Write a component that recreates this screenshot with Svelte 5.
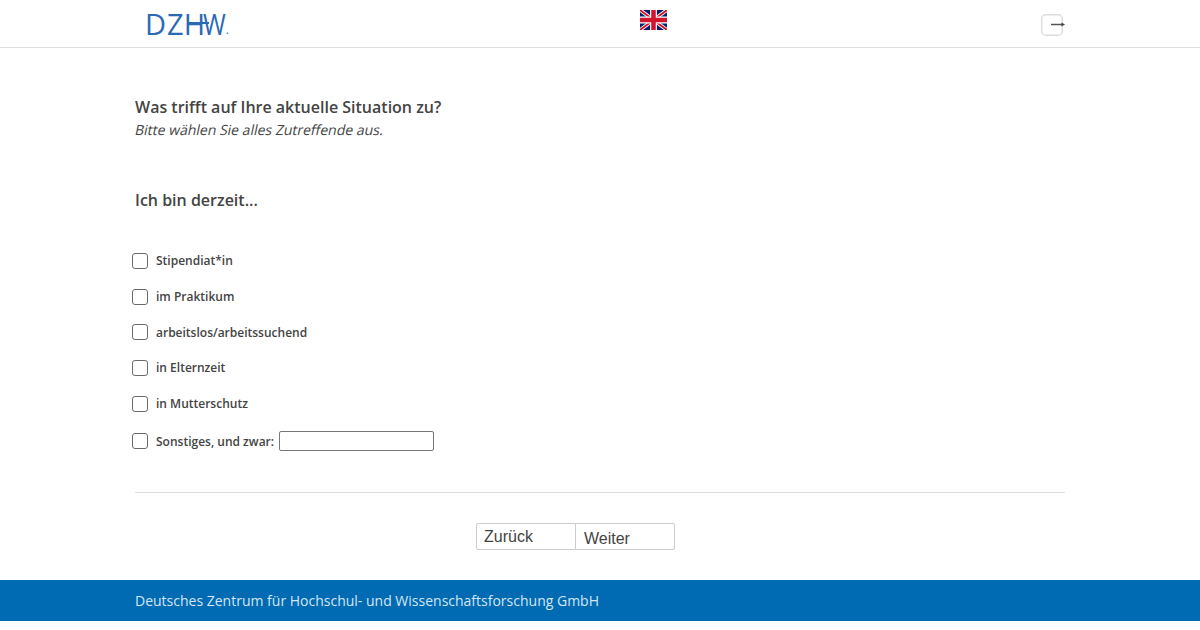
<script>
  const options = ['Stipendiat*in', 'im Praktikum', 'arbeitslos/arbeitssuchend', 'in Elternzeit', 'in Mutterschutz'];
</script>

<header class="topbar">
  <div class="logo"><span class="d">D</span><span class="z">Z</span><span class="h">H</span><span class="w">W</span><span class="dot">.</span></div>
  <svg class="flag" viewBox="0 0 60 44" preserveAspectRatio="none" aria-label="English">
    <rect width="60" height="44" fill="#00206e" />
    <path d="M0 0L60 44M60 0L0 44" stroke="#fff" stroke-width="8" />
    <path d="M0 0L60 44M60 0L0 44" stroke="#cf142b" stroke-width="4" />
    <path d="M30 0V44M0 22H60" stroke="#fff" stroke-width="15" />
    <path d="M30 0V44M0 22H60" stroke="#cf142b" stroke-width="10" />
  </svg>
  <svg class="exit" viewBox="0 0 26 24" aria-label="Abmelden">
    <rect x="1.7" y="1.7" width="20.6" height="20.6" rx="4" fill="none" stroke="#dcdcdc" stroke-width="1.4" />
    <path d="M11 11.5H22" stroke="#555" stroke-width="1.5" />
    <path d="M21.5 9.6L25 11.5L21.5 13.4Z" fill="#444" />
  </svg>
</header>

<main class="content">
  <h1>Was trifft auf Ihre aktuelle Situation zu?</h1>
  <p class="hint"><span>Bitte wählen Sie alles Zutreffende aus.</span></p>
  <h2>Ich bin derzeit...</h2>

  <ul class="options">
    {#each options as option}
      <li>
        <label><input type="checkbox" /><span>{option}</span></label>
      </li>
    {/each}
    <li class="other">
      <label><input type="checkbox" /><span>Sonstiges, und zwar:</span></label>
      <input class="other-text" type="text" />
    </li>
  </ul>

  <hr />

  <div class="buttons">
    <button type="button" class="back">Zurück</button>
    <button type="button" class="next">Weiter</button>
  </div>
</main>

<footer class="footer">
  <div>Deutsches Zentrum für Hochschul- und Wissenschaftsforschung GmbH</div>
</footer>

<style>
  :global(body) {
    margin: 0;
    background: #fff;
    color: #444;
    font-family: "Open Sans", sans-serif;
  }

  .topbar {
    position: relative;
    height: 47px;
    border-bottom: 1px solid #ddd;
  }
  .logo {
    position: absolute;
    left: 145px;
    top: 8px;
    display: flex;
    color: #2a6ab5;
    font-family: "Open Sans", sans-serif;
    font-size: 29px;
    font-weight: 400;
    line-height: 32px;
  }
  .logo .d { letter-spacing: 1px; }
  .logo .h { letter-spacing: -2px; position: relative; }
  .logo .h::after {
    content: "";
    position: absolute;
    left: 4px;
    top: 14px;
    width: 21px;
    height: 2px;
    background: #2a6ab5;
  }
  .logo .w { letter-spacing: -4px; transform: scaleX(0.85); transform-origin: left; }
  .logo .dot { font-size: 12px; margin-top: 6px; }
  .flag {
    position: absolute;
    left: 640px;
    top: 10px;
    width: 27px;
    height: 20px;
  }
  .exit {
    position: absolute;
    left: 1040px;
    top: 13px;
    width: 26px;
    height: 24px;
  }

  .content {
    width: 930px;
    margin-left: 135px;
    padding-top: 47px;
  }
  h1 {
    margin: 0;
    font-size: 16px;
    line-height: 24px;
    font-weight: 600;
  }
  .hint {
    margin: 0;
    font-size: 14px;
    line-height: 22px;
  }
  /* the reference's italic is a slanted roman */
  .hint span {
    display: inline-block;
    margin-left: -2px;
    transform: skewX(-12deg);
    transform-origin: left bottom;
  }
  h2 {
    margin: 47px 0 0;
    font-size: 16px;
    line-height: 24px;
    font-weight: 600;
  }

  .options {
    list-style: none;
    margin: 31px 0 0;
    padding: 0;
  }
  .options li {
    display: flex;
    align-items: center;
    height: 35.7px;
  }
  .options li.other {
    height: 40px;
  }
  label {
    display: flex;
    align-items: center;
    font-size: 12px;
    font-weight: 600;
  }
  input[type="checkbox"] {
    appearance: none;
    box-sizing: border-box;
    width: 16px;
    height: 16px;
    margin: 0 8px 0 -3px;
    border: 1px solid #6b6b6b;
    border-radius: 3px;
    background: #fff;
  }
  .other-text {
    box-sizing: border-box;
    width: 155px;
    height: 20px;
    margin: 0 0 0 5px;
    padding: 0 4px;
    border: 1px solid #767676;
    border-radius: 2px;
  }

  hr {
    height: 1px;
    margin: 31px 0 0;
    border: 0;
    background: #ddd;
  }

  .buttons {
    display: flex;
    justify-content: center;
    margin-top: 30px;
    padding-right: 49px;
  }
  button {
    box-sizing: border-box;
    width: 100px;
    height: 27px;
    padding: 0 7px;
    border: 1px solid #ccc;
    background: #fff;
    color: #444;
    font-family: "Liberation Sans", sans-serif;
    font-size: 16px;
    text-align: left;
  }
  .back {
    border-radius: 2px 0 0 2px;
  }
  .next {
    margin-left: -1px;
    padding-left: 8px;
    border-radius: 0 2px 2px 0;
    padding-top: 5px;
  }

  .footer {
    height: 41px;
    margin-top: 30px;
    background: #006ab3;
    color: #d5e6f2;
    font-size: 14px;
    line-height: 41px;
  }
  .footer div {
    margin-left: 135px;
  }
</style>
